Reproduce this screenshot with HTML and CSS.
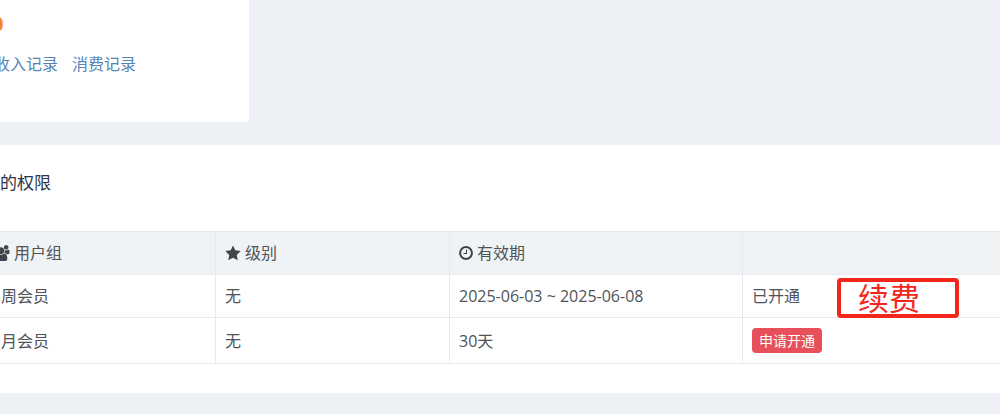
FILE: index.html
```html
<!DOCTYPE html>
<html lang="zh-CN">
<head>
<meta charset="utf-8">
<title>我的权限</title>
<link rel="stylesheet" href="styles.css">
</head>
<body>
<main class="page">
  <section class="balance">
    <strong class="balance-value">0</strong>
    <nav class="balance-links">
      <a href="#income">收入记录</a>
      <a href="#spending">消费记录</a>
    </nav>
  </section>
  <section class="panel">
    <h2 class="panel-title">我的权限</h2>
    <table class="groups">
      <thead>
        <tr>
          <th class="col-group"><span class="label"><svg class="icon icon-users" viewBox="0 0 1920 1792" aria-hidden="true"><path d="M593 896q-162 5-265 128H194q-82 0-138-40.500T0 865q0-353 124-353 6 0 43.500 21t97.500 42.500T384 597q67 0 133-23-5 37-5 66 0 139 81 256zM1664 1533q0 120-73 189.500t-194 69.500H523q-121 0-194-69.500T256 1533q0-53 3.500-103.500t14-109T300 1212t43-97.500 62-81 85.500-53.500T602 960q10 0 43 21.500t73 48 107 48 135 21.500 135-21.500 107-48 73-48 43-21.500q61 0 111.500 20t85.500 53.500 62 81 43 97.500 26.500 108.500 14 109 3.500 103.500zM640 256q0 106-75 181t-181 75-181-75-75-181 75-181T384 0t181 75 75 181zM1344 640q0 159-112.500 271.500T960 1024 688.500 911.500 576 640t112.500-271.500T960 256t271.500 112.500T1344 640zM1920 865q0 78-56 118.500t-138 40.500h-134q-103-123-265-128 81-117 81-256 0-29-5-66 66 23 133 23 59 0 119-21.500t97.500-42.500 43.500-21q124 0 124 353zM1792 256q0 106-75 181t-181 75-181-75-75-181 75-181T1536 0t181 75 75 181z"/></svg>用户组</span></th>
          <th class="col-level"><span class="label"><svg class="icon icon-star" viewBox="0 0 16 16" aria-hidden="true"><path d="M8 .4l2.300 4.900 5.300.8-3.800 3.800.9 5.400L8 12.800l-4.700 2.500.9-5.400L.4 6.100l5.300-.8z"/></svg>级别</span></th>
          <th class="col-period"><span class="label"><svg class="icon" viewBox="0 0 14 14" aria-hidden="true"><circle class="stroke" cx="7" cy="7" r="5.900"/><path d="M7 3.500h1v4.500H4.500V7H7z"/></svg>有效期</span></th>
          <th class="col-action"></th>
        </tr>
      </thead>
      <tbody>
        <tr>
          <td>周会员</td>
          <td>无</td>
          <td>2025-06-03 ~ 2025-06-08</td>
          <td class="status">已开通<span class="callout">续费</span></td>
        </tr>
        <tr class="last">
          <td>月会员</td>
          <td>无</td>
          <td>30天</td>
          <td><button type="button" class="apply">申请开通</button></td>
        </tr>
      </tbody>
    </table>
  </section>
</main>
</body>
</html>
```
FILE: styles.css
```css
* {
  box-sizing: border-box;
}

body {
  margin: 0;
  overflow-x: hidden;
  background: #edf1f6;
  color: #505458;
  font-family: "Open Sans", "Noto Sans CJK SC", sans-serif;
  font-size: 16px;
  font-weight: 400;
  line-height: 24px;
}

/* The content column runs past both window edges. */
.page {
  display: flex;
  flex-direction: column;
  gap: 23px;
  margin: 0 -40px;
}

.balance {
  align-self: flex-start;
  width: 289px;
  padding: 12px 32px 46px;
  border-radius: 0 0 4px 4px;
  background: #fff;
}

.balance-value {
  display: block;
  color: #f7831e;
  font-size: 20px;
  font-weight: 700;
}

.balance-links {
  display: flex;
  gap: 14px;
  margin-top: 16px;
  padding-left: 2px;
}

.balance-links a {
  color: #5585b5;
  text-decoration: none;
}

.panel {
  padding: 26px 23px 29px;
  background: #fff;
}

.panel-title {
  margin: 0 0 36px;
  color: #2f3544;
  font-size: 17px;
  font-weight: 400;
  line-height: 24px;
}

.groups {
  width: 100%;
  border-collapse: collapse;
  table-layout: fixed;
}

.groups th,
.groups td {
  padding: 9px;
  border: 1px solid #e6eaee;
  text-align: left;
  font-weight: inherit;
}

.groups td:first-child {
  padding-left: 17px;
}

.groups th {
  background: #eff3f6;
}

.groups th:first-child {
  padding-left: 8px;
}

.groups .last td {
  padding: 10px 9px;
}

.groups .last td:first-child {
  padding-left: 17px;
}

.col-group {
  width: 232px;
}

.col-level {
  width: 234px;
}

.col-period {
  width: 293px;
}

.label {
  display: flex;
  align-items: center;
  gap: 4px;
}

.icon {
  width: 14px;
  height: 14px;
  fill: #40454b;
}

.icon-users {
  width: 18px;
  height: 16px;
}

.icon-star {
  width: 16px;
  height: 16px;
}

.stroke {
  fill: none;
  stroke: #40454b;
  stroke-width: 2;
}

.status {
  position: relative;
}

.callout {
  position: absolute;
  top: 3px;
  left: 94px;
  width: 122px;
  padding-left: 17px;
  border: 4px solid #f3261b;
  border-radius: 4px;
  color: #f3261b;
  font-size: 31px;
  line-height: 32px;
}

.apply {
  display: block;
  padding: 2px 7px;
  border: 0;
  border-radius: 4px;
  background: #e7505a;
  color: #fff;
  font: inherit;
  font-size: 14px;
  line-height: 21px;
}
```
